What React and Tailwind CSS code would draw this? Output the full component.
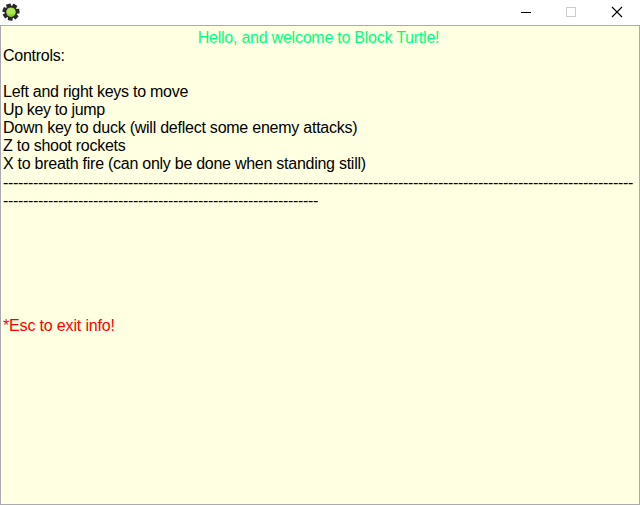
const dashes = (n) => "-".repeat(n);

function Gear() {
  return (
    <svg width="18" height="18" viewBox="0 0 18 18">
      <g fill="#2a2a2a">
        {[0, 51.4, 102.8, 154.3, 205.7, 257.1, 308.6].map((a) => (
          <rect key={a} x="6.4" y="0.5" width="4.8" height="5" rx="0.6" transform={`rotate(${a - 18} 9 9)`} />
        ))}
        <circle cx="9" cy="9" r="6.2" />
      </g>
      <circle cx="9" cy="9.2" r="4.8" fill="#8fd02e" />
      <ellipse cx="9" cy="8.3" rx="4.1" ry="3.2" fill="#b2e65a" />
    </svg>
  );
}

export default function App() {
  return (
    <div className="flex h-[505px] w-[640px] flex-col overflow-hidden bg-white font-['Liberation_Sans',Arial,sans-serif]">
      <header className="flex h-[25px] shrink-0 items-start justify-between pl-[2px] pt-[3px]">
        <Gear />
        <div className="flex pr-[17px] pt-[3px]">
          <svg width="103" height="14" viewBox="520 6 103 14" fill="none" shapeRendering="crispEdges">
            <path d="M521 12.5h10" stroke="#000" />
            <rect x="566.5" y="7.5" width="9" height="9" stroke="#ccc" />
            <path d="M612 7l10 10M622 7l-10 10" stroke="#000" strokeWidth="1.1" shapeRendering="auto" />
          </svg>
        </div>
      </header>
      <main className="flex-1 border border-[#aaaaaf] bg-[#ffffe1] pl-[2px] pt-[3px] text-[16px] leading-[18px] tracking-[-0.26px] text-black">
        <p className="pr-[5px] text-center tracking-[-0.24px] text-[#00ff80]">Hello, and welcome to Block Turtle!</p>
        <p>Controls:</p>
        <p>&nbsp;</p>
        <p>Left and right keys to move</p>
        <p className="tracking-[-0.36px]">Up key to jump</p>
        <p className="tracking-[-0.24px]">Down key to duck (will deflect some enemy attacks)</p>
        <p>Z to shoot rockets</p>
        <p>X to breath fire (can only be done when standing still)</p>
        <p className="mt-px whitespace-nowrap tracking-[-0.328px]">{dashes(126)}</p>
        <p className="whitespace-nowrap tracking-[-0.328px]">{dashes(63)}</p>
        <p className="mt-[107px] tracking-[-0.16px] text-[#ff0000]">*Esc to exit info!</p>
      </main>
    </div>
  );
}
